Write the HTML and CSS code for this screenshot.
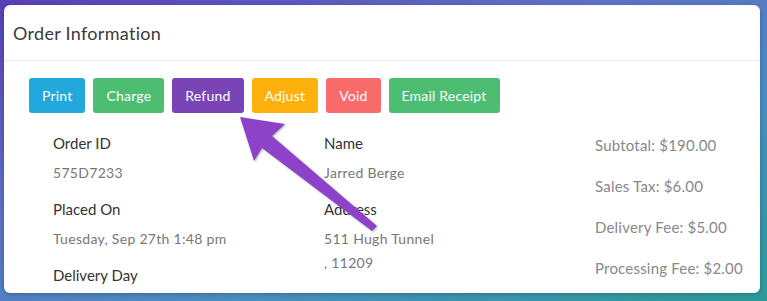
FILE: index.html
```html
<!DOCTYPE html>
<html lang="en">
<head>
    <meta charset="UTF-8">
    <title>Order Information</title>
    <link rel="stylesheet" href="styles.css">
</head>
<body>
    <div class="card">
        <div class="card-header">Order Information</div>
        <div class="card-body">
            <div class="actions">
                <button class="btn btn-blue">Print</button>
                <button class="btn btn-green">Charge</button>
                <button class="btn btn-purple">Refund</button>
                <button class="btn btn-orange">Adjust</button>
                <button class="btn btn-red">Void</button>
                <button class="btn btn-green">Email Receipt</button>
            </div>
            <div class="details">
                <div class="col">
                    <div class="label">Order ID</div>
                    <div class="value">575D7233</div>
                    <div class="label">Placed On</div>
                    <div class="value">Tuesday, Sep 27th 1:48 pm</div>
                    <div class="label">Delivery Day</div>
                </div>
                <div class="col">
                    <div class="label">Name</div>
                    <div class="value">Jarred Berge</div>
                    <div class="label">Address</div>
                    <div class="value">511 Hugh Tunnel<br>, 11209</div>
                    <div class="label">Phone</div>
                </div>
                <div class="col totals">
                    <div>Subtotal: $190.00</div>
                    <div>Sales Tax: $6.00</div>
                    <div>Delivery Fee: $5.00</div>
                    <div>Processing Fee: $2.00</div>
                </div>
            </div>
        </div>
    </div>

    <!-- annotation arrow pointing at Refund -->
    <svg class="arrow" width="767" height="301" viewBox="0 0 767 301">
        <polygon points="240,117 285,124 272,136 377,226 372,231 262,148 254,161" fill="#8d42c9"/>
    </svg>
</body>
</html>
```

FILE: styles.css
```css
html, body {
    height: 100%;
}
body {
    margin: 0;
    overflow: hidden;
    font-family: Lato, 'Open Sans', sans-serif;
    background: linear-gradient(160deg, #5a3fb6 0%, #5f6fc6 35%, #4a8cc0 65%, #2c9a98 100%);
    padding: 5px 7px 0 4px;
    box-sizing: border-box;
    position: relative;
}
.card {
    background: white;
    border-radius: 6px;
    height: 288px;
    overflow: hidden;
    box-shadow: 0 1px 4px rgba(0,0,0,0.25);
}
.card-header {
    height: 55px;
    padding: 0 9px;
    display: flex;
    align-items: center;
    font-size: 18px;
    letter-spacing: 0.3px;
    color: #3a3a3a;
    border-bottom: 1px solid #eeeeee;
}
.card-body {
    padding: 17px 25px 0;
}
.actions {
    display: flex;
    gap: 8px;
}
.btn {
    font-family: inherit;
    font-size: 14px;
    letter-spacing: 0.2px;
    color: white;
    border: none;
    border-radius: 3px;
    height: 35px;
    padding: 0 13px;
}
.btn-blue { background: #23a8db; }
.btn-green { background: #4dbd72; }
.btn-purple { background: #7a44b6; }
.btn-orange { background: #feb00c; }
.btn-red { background: #f86b6a; }

.details {
    display: grid;
    grid-template-columns: 271px 271px 1fr;
    padding: 20px 0 0 24px;
}
.label {
    font-size: 15px;
    color: #333;
    line-height: 20px;
    margin-bottom: 8px;
}
.value {
    font-size: 14px;
    letter-spacing: 0.3px;
    color: #777;
    line-height: 24px;
    margin-bottom: 14px;
}
.totals {
    font-size: 15px;
    letter-spacing: 0.2px;
    color: #888;
    line-height: 20px;
    white-space: nowrap;
    display: flex;
    flex-direction: column;
    gap: 21px;
    padding-top: 2px;
}
.arrow {
    position: absolute;
    left: 0;
    top: 0;
    filter: drop-shadow(1px 1px 1px rgba(0,0,0,0.3));
}
```
